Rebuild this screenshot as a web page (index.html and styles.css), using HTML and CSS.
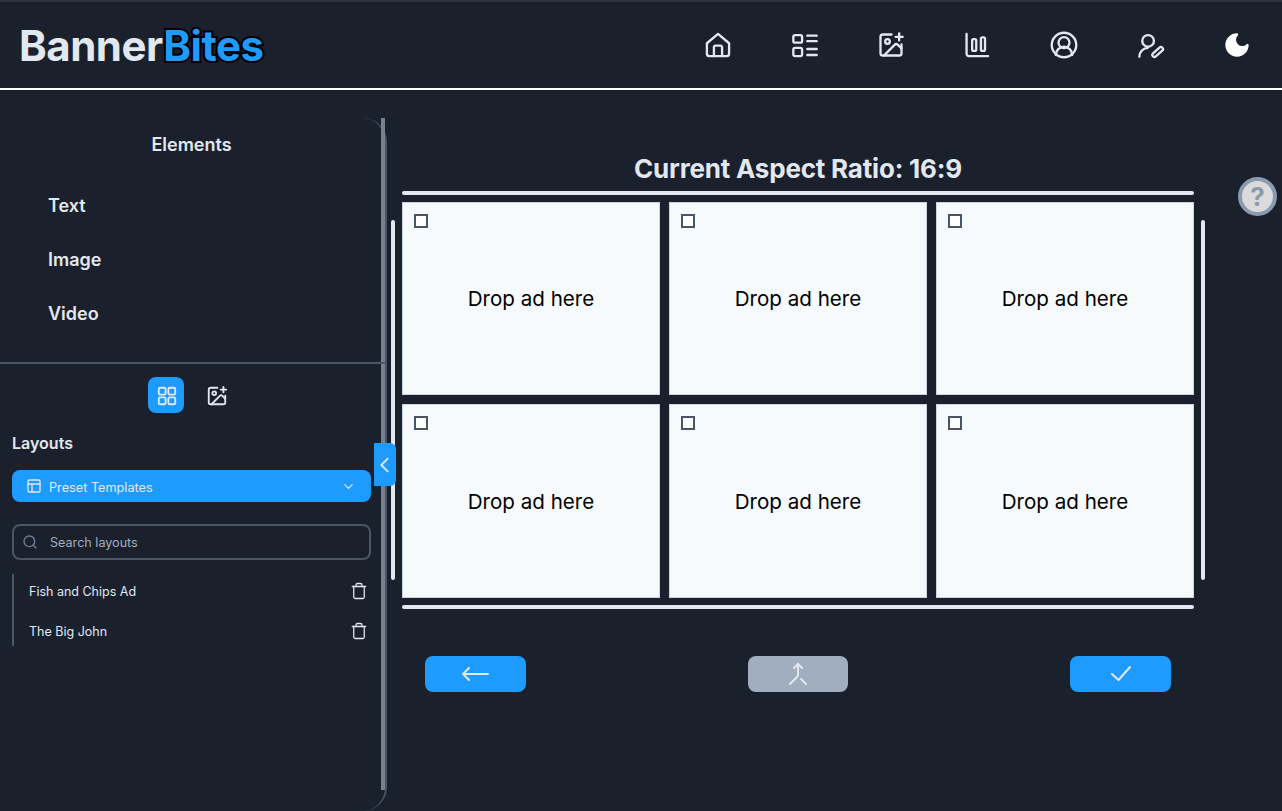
FILE: index.html
```html
<!DOCTYPE html>
<html lang="en">
<head>
    <meta charset="UTF-8">
    <meta name="viewport" content="width=device-width, initial-scale=1.0">
    <title>BannerBites</title>
    <link rel="stylesheet" href="styles.css">
</head>
<body>

    <header class="topbar">
        <div class="logo">Banner<span class="logo-accent">Bites</span></div>
        <nav class="nav">
            <svg class="icon nav-icon" viewBox="0 0 24 24"><path d="M2.500 10.500 12 2.500l9.500 8v9a2 2 0 0 1-2 2h-15a2 2 0 0 1-2-2z"/><path d="M8.500 21.500V14a1.500 1.500 0 0 1 1.500-1.500h4a1.500 1.500 0 0 1 1.500 1.500v7.500"/></svg>
            <svg class="icon nav-icon" viewBox="0 0 24 24"><rect x="2" y="3.500" width="7.500" height="6.500" rx="1.500"/><rect x="2" y="14.500" width="7.500" height="7" rx="1.500"/><path d="M14 4h8M14 8.700h8M14 15.400h8M14 20.600h8"/></svg>
            <svg class="icon nav-icon" viewBox="0 0 24 24"><path d="M16 5h6M19 2v6"/><path d="M21 11.500V19a2 2 0 0 1-2 2H5a2 2 0 0 1-2-2V5a2 2 0 0 1 2-2h7.500"/><path d="m21 15-3.086-3.086a2 2 0 0 0-2.828 0L6 21"/><circle cx="9" cy="9" r="2"/></svg>
            <svg class="icon nav-icon" viewBox="0 0 24 24"><path d="M2.200 2.500v17a2 2 0 0 0 2 2h16.500"/><rect x="14.500" y="5.500" width="3.500" height="11.500" rx="1.200"/><rect x="7" y="7" width="3.500" height="10" rx="1.200"/></svg>
            <svg class="icon nav-icon" viewBox="0 0 24 24"><circle cx="12" cy="12" r="10.500"/><circle cx="12" cy="10" r="4.700"/><path d="M19 20.500a7 7 0 0 0-14 0"/></svg>
            <svg class="icon nav-icon" viewBox="0 0 24 24"><circle cx="9.500" cy="8.500" r="5"/><path d="M2 22c0-4 3-7 7-7.500"/><rect x="12.200" y="16.200" width="11" height="3.600" rx="1.800" transform="rotate(-42 17.700 18)"/></svg>
            <svg class="icon nav-icon moon" viewBox="0 0 24 24"><path d="M12 3a6 6 0 0 0 9 9 9 9 0 1 1-9-9Z"/></svg>
        </nav>
    </header>

    <div class="workspace">
        <aside class="sidebar">
            <div class="scrollbar"></div>
            <section class="elements">
                <h3 class="elements-title">Elements</h3>
                <div class="element-item">Text</div>
                <div class="element-item">Image</div>
                <div class="element-item">Video</div>
            </section>

            <section class="library">
                <div class="tabs">
                    <button class="tab tab-active">
                        <svg class="icon tab-icon" viewBox="0 0 24 24"><rect x="3" y="3" width="7.500" height="7.500" rx="1.500"/><rect x="13.500" y="3" width="7.500" height="7.500" rx="1.500"/><rect x="3" y="13.500" width="7.500" height="7.500" rx="1.500"/><rect x="13.500" y="13.500" width="7.500" height="7.500" rx="1.500"/></svg>
                    </button>
                    <button class="tab">
                        <svg class="icon tab-icon" viewBox="0 0 24 24"><path d="M16 5h6M19 2v6"/><path d="M21 11.500V19a2 2 0 0 1-2 2H5a2 2 0 0 1-2-2V5a2 2 0 0 1 2-2h7.500"/><path d="m21 15-3.086-3.086a2 2 0 0 0-2.828 0L6 21"/><circle cx="9" cy="9" r="2"/></svg>
                    </button>
                </div>

                <h4 class="library-title">Layouts</h4>

                <div class="preset">
                    <svg class="icon small-icon" viewBox="0 0 24 24"><rect x="3" y="3" width="18" height="18" rx="2"/><path d="M3 9h18M9 21V9"/></svg>
                    <span class="preset-label">Preset Templates</span>
                    <svg class="icon chevron" viewBox="0 0 24 24"><path d="m6 9 6 6 6-6"/></svg>
                </div>

                <div class="search">
                    <svg class="icon small-icon" viewBox="0 0 24 24"><circle cx="11" cy="11" r="8"/><path d="m21 21-4.300-4.300"/></svg>
                    <span>Search layouts</span>
                </div>

                <ul class="saved">
                    <li class="saved-item">
                        <span>Fish and Chips Ad</span>
                        <svg class="icon trash" viewBox="0 0 24 24"><path d="M3 6h18"/><path d="M19 6v14a2 2 0 0 1-2 2H7a2 2 0 0 1-2-2V6"/><path d="M8 6V4a2 2 0 0 1 2-2h4a2 2 0 0 1 2 2v2"/></svg>
                    </li>
                    <li class="saved-item">
                        <span>The Big John</span>
                        <svg class="icon trash" viewBox="0 0 24 24"><path d="M3 6h18"/><path d="M19 6v14a2 2 0 0 1-2 2H7a2 2 0 0 1-2-2V6"/><path d="M8 6V4a2 2 0 0 1 2-2h4a2 2 0 0 1 2 2v2"/></svg>
                    </li>
                </ul>
            </section>

            <button class="collapse">
                <svg class="icon collapse-icon" viewBox="0 0 24 24"><path d="m15 5-7 7 7 7"/></svg>
            </button>
        </aside>

        <main class="editor">
            <h2 class="ratio">Current Aspect Ratio: 16:9</h2>

            <div class="stage">
                <div class="bar bar-h bar-top"></div>
                <div class="bar bar-v bar-left"></div>
                <div class="cells">
                    <div class="cell"><input class="cell-check" type="checkbox">Drop ad here</div>
                    <div class="cell"><input class="cell-check" type="checkbox">Drop ad here</div>
                    <div class="cell"><input class="cell-check" type="checkbox">Drop ad here</div>
                    <div class="cell"><input class="cell-check" type="checkbox">Drop ad here</div>
                    <div class="cell"><input class="cell-check" type="checkbox">Drop ad here</div>
                    <div class="cell"><input class="cell-check" type="checkbox">Drop ad here</div>
                </div>
                <div class="bar bar-v bar-right"></div>
                <div class="bar bar-h bar-bottom"></div>
            </div>

            <div class="actions">
                <button class="action">
                    <svg class="icon arrow-icon" viewBox="0 0 28 28"><path d="M27 14H2M8 8l-6 6 6 6"/></svg>
                </button>
                <button class="action action-disabled">
                    <svg class="icon action-icon" viewBox="0 0 24 24"><path d="m8 6 4-4 4 4"/><path d="M12 2v10.300a4 4 0 0 1-1.172 2.872L4 22"/><path d="m20 22-5-5"/></svg>
                </button>
                <button class="action">
                    <svg class="icon action-icon" viewBox="0 0 24 24"><path d="M21 5 9.500 18 3 12"/></svg>
                </button>
            </div>

            <div class="help">?</div>
        </main>
    </div>

</body>
</html>
```

FILE: styles.css
```css
* { box-sizing: border-box; }
html, body { height: 100%; }
body { margin: 0; background: #1a202c; color: #e2e8f0; font-family: Inter, "Liberation Sans", sans-serif; overflow: hidden; display: flex; flex-direction: column; }
h2, h3, h4, ul { margin: 0; padding: 0; }
button { border: 0; padding: 0; cursor: pointer; }

.icon { fill: none; stroke: currentColor; stroke-width: 2; stroke-linecap: round; stroke-linejoin: round; display: block; }

/* top bar */
.topbar { height: 90px; flex: none; display: flex; align-items: center; justify-content: space-between; padding: 0 31px 0 19px; border-top: 2px solid #2f343c; border-bottom: 2px solid #fff; }
.logo { font-size: 42px; font-weight: 700; letter-spacing: -0.5px; color: #e2e8f0; }
.logo-accent { color: #1e9bff; -webkit-text-stroke: 4px #000; paint-order: stroke fill; }
.nav { display: flex; gap: 58.500px; }
.nav-icon { width: 28px; height: 28px; }
.moon { fill: #fff; stroke: #fff; }

/* left panel */
.workspace { flex: 1; display: flex; min-height: 0; }
.sidebar { position: relative; z-index: 1; width: 387px; flex: none; margin-top: 28px; border-right: 2px solid #4a5568; border-radius: 0 24px 24px 0; }
.scrollbar { position: absolute; top: 0; right: 0; bottom: 21px; width: 4px; background: #7a818e; }

.elements { position: relative; height: 246px; border-bottom: 2px solid #4a5568; }
.elements-title { font-size: 18px; font-weight: 600; text-align: center; line-height: 22px; padding: 16px 2px 0 0; margin-bottom: 39px; }
.element-item { font-size: 18px; font-weight: 600; line-height: 22px; margin: 0 0 32px 48px; }

.library { padding: 13px 14px 0 12px; }
.tabs { display: flex; justify-content: center; gap: 15px; margin-left: -1px; }
.tab { width: 36px; height: 36px; padding-top: 2px; border-radius: 8px; background: none; color: #e2e8f0; display: flex; align-items: center; justify-content: center; }
.tab-active { background: #1e9bff; padding-left: 2px; }
.tab-icon { width: 22px; height: 22px; }
.library-title { font-size: 16px; font-weight: 600; line-height: 20px; margin: 20px 0 17px; }

.preset { height: 32px; background: #1e9bff; border-radius: 8px; display: flex; align-items: center; padding: 0 15px 0 14px; font-size: 12.700px; color: #e2e8f0; }
.small-icon { width: 16px; height: 16px; flex: none; }
.preset-label { flex: 1; margin: 2px 0 0 7px; }
.chevron { width: 15px; height: 15px; }

.search { height: 36px; margin-top: 22px; border: 2px solid #4a5568; border-radius: 8px; display: flex; align-items: center; padding: 0 8px; gap: 12px; font-size: 12.600px; color: #a0aec0; }
.search .small-icon { color: #718096; }

.saved { list-style: none; height: 72px; margin-top: 14px; padding-top: 1px; border-left: 2px solid #4a5568; }
.saved-item { height: 32px; display: flex; align-items: center; justify-content: space-between; padding: 0 3px 0 15px; font-size: 12.500px; }
.saved-item + .saved-item { margin-top: 8px; }
.trash { width: 18px; height: 18px; stroke-width: 1.700; }

.collapse { position: absolute; top: 325px; right: -11px; width: 22px; height: 43px; background: #1e9bff; border-radius: 0 6px 6px 0; color: #e2e8f0; display: flex; align-items: center; justify-content: center; }
.collapse-icon { width: 22px; height: 22px; }

/* editor */
.editor { position: relative; flex: 1; padding: 63px 0 0 4px; }
.ratio { width: 814px; font-size: 26px; font-weight: 700; line-height: 32px; text-align: center; margin-bottom: 6px; letter-spacing: -0.2px; }

.stage { width: 814px; display: grid; grid-template-columns: 4px 792px 4px; column-gap: 7px; row-gap: 7px; grid-template-rows: 4px 396px 4px; }
.bar { background: #e2e8f0; border-radius: 2px; }
.bar-top { grid-column: 2; grid-row: 1; }
.bar-bottom { grid-column: 2; grid-row: 3; }
.bar-left { grid-column: 1; grid-row: 2; }
.bar-right { grid-column: 3; grid-row: 2; }
.bar-v { height: 360px; align-self: center; }

.cells { grid-column: 2; grid-row: 2; display: grid; grid-template-columns: repeat(3, 258px); grid-template-rows: 193px 194px; gap: 9px; }
.cell { position: relative; background: #f7fafc; border: 1px solid #cbd5e0; color: #000; font-size: 20.600px; display: flex; align-items: center; justify-content: center; }
.cell:nth-child(n+4) { padding-top: 1px; }
.cell-check { position: absolute; top: 11px; left: 11px; width: 14px; height: 14px; margin: 0; appearance: none; background: #fff; border: 2px solid #4a5568; }

.actions { width: 746px; margin: 47px 0 0 34px; display: flex; justify-content: space-between; }
.action { width: 101px; height: 36px; border-radius: 8px; background: #1e9bff; color: #e2e8f0; display: flex; align-items: center; justify-content: center; }
.action-disabled { width: 100px; background: #a0aec0; }
.action-icon { width: 24px; height: 24px; }
.arrow-icon { width: 28px; height: 28px; margin-left: -2px; }

.help { position: absolute; top: 87px; right: 5px; width: 39px; height: 39px; border-radius: 50%; background: #dbdbdb; border: 4px solid #8a9bb0; color: #8a9bb0; font-size: 26px; font-weight: 700; display: flex; align-items: center; justify-content: center; }
```
